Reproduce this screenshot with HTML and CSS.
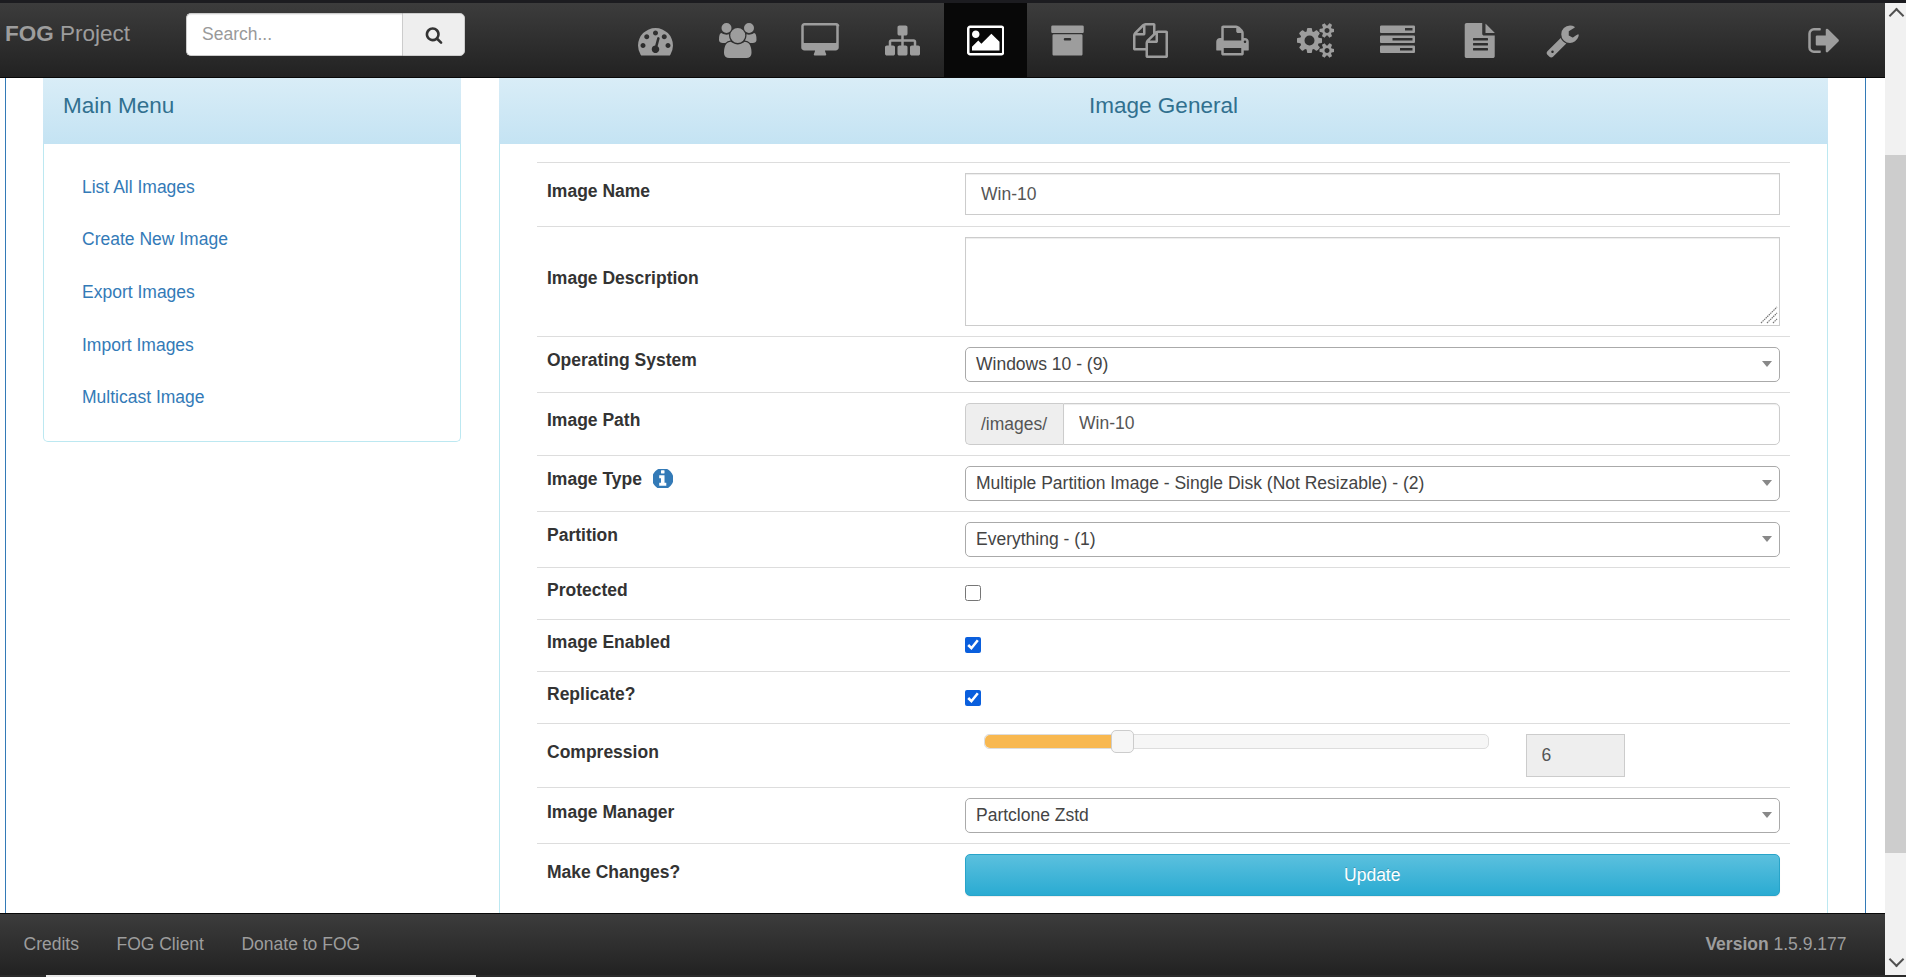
FILE: index.html
```html
<!DOCTYPE html>
<html lang="en">
<head>
<meta charset="UTF-8">
<meta name="viewport" content="width=device-width, initial-scale=1.0">
<title>FOG Project - Image General</title>
<link rel="stylesheet" href="styles.css">
</head>
<body>

<div class="window">
    <div class="strip-top"></div>
    <div class="window-body">
        <div class="viewport">
            <header class="topbar">
                <a class="brand" href="#"><b>FOG</b> Project</a>
                <form class="search">
                    <input type="text" placeholder="Search...">
                    <button type="button" aria-label="Search">
                        <svg viewBox="0 0 1792 1792"><path d="M1216 832q0-185-131.5-316.5t-316.5-131.5-316.5 131.5-131.5 316.5 131.5 316.5 316.5 131.5 316.5-131.5 131.5-316.5zm512 832q0 52-38 90t-90 38q-54 0-90-38l-343-342q-179 124-399 124-143 0-273.5-55.5t-225-150-150-225-55.5-273.5 55.5-273.5 150-225 225-150 273.5-55.5 273.5 55.5 225 150 150 225 55.5 273.5q0 220-124 399l343 343q37 37 37 90z"/></svg>
                    </button>
                </form>
                <nav class="mainnav">
                    <a href="#"><svg viewBox="0 0 1792 1792"><path d="M384 1152q0-53-37.5-90.5t-90.5-37.5-90.5 37.5-37.5 90.5 37.5 90.5 90.5 37.5 90.5-37.5 37.5-90.5zm192-448q0-53-37.5-90.5t-90.5-37.5-90.5 37.5-37.5 90.5 37.5 90.5 90.5 37.5 90.5-37.5 37.5-90.5zm428 481l101-382q6-26-7.5-48.5t-38.5-29.5-48 6.5-30 39.5l-101 382q-60 5-107 43.5t-63 98.5q-20 77 20 146t117 89 146-20 89-117q16-60-6-117t-72-91zm660-33q0-53-37.5-90.5t-90.5-37.5-90.5 37.5-37.5 90.5 37.5 90.5 90.5 37.5 90.5-37.5 37.5-90.5zm-640-640q0-53-37.5-90.5t-90.5-37.5-90.5 37.5-37.5 90.5 37.5 90.5 90.5 37.5 90.5-37.5 37.5-90.5zm448 192q0-53-37.5-90.5t-90.5-37.5-90.5 37.5-37.5 90.5 37.5 90.5 90.5 37.5 90.5-37.5 37.5-90.5zm320 448q0 261-141 483-19 29-54 29h-1402q-35 0-54-29-141-221-141-483 0-182 71-348t191-286 286-191 348-71 348 71 286 191 191 286 71 348z"/></svg></a>
                    <a href="#"><svg class="wide" viewBox="0 0 1920 1792"><path d="M593 896q-162 5-265 128h-134q-82 0-138-40.5t-56-118.5q0-353 124-353 6 0 43.5 21t97.5 42.5 119 21.5q67 0 133-23-5 37-5 66 0 139 81 256zm1071 637q0 120-73 189.5t-194 69.5h-874q-121 0-194-69.5t-73-189.5q0-53 3.5-103.5t14-109 26.5-108.5 43-97.5 62-81 85.5-53.5 111.5-20q10 0 43 21.5t73 48 107 48 135 21.5 135-21.5 107-48 73-48 43-21.5q61 0 111.5 20t85.5 53.5 62 81 43 97.5 26.5 108.5 14 109 3.5 103.5zm-1024-1277q0 106-75 181t-181 75-181-75-75-181 75-181 181-75 181 75 75 181zm704 384q0 159-112.5 271.5t-271.5 112.5-271.5-112.5-112.5-271.5 112.5-271.5 271.5-112.5 271.5 112.5 112.5 271.5zm576 225q0 78-56 118.5t-138 40.5h-134q-103-123-265-128 81-117 81-256 0-29-5-66 66 23 133 23 59 0 119-21.5t97.5-42.5 43.5-21q124 0 124 353zm-128-609q0 106-75 181t-181 75-181-75-75-181 75-181 181-75 181 75 75 181z"/></svg></a>
                    <a href="#"><svg class="wider" viewBox="0 0 2048 1792"><path d="M1856 992v-832q0-13-9.5-22.5t-22.5-9.5h-1600q-13 0-22.5 9.5t-9.5 22.5v832q0 13 9.5 22.5t22.5 9.5h1600q13 0 22.5-9.5t9.5-22.5zm128-832v1088q0 66-47 113t-113 47h-544q0 37 16 77.5t32 71 16 43.5q0 26-19 45t-45 19h-512q-26 0-45-19t-19-45q0-14 16-44t32-70 16-78h-544q-66 0-113-47t-47-113v-1088q0-66 47-113t113-47h1632q66 0 113 47t47 113z"/></svg></a>
                    <a href="#"><svg viewBox="0 0 1792 1792"><path d="M1792 1248v320q0 40-28 68t-68 28h-320q-40 0-68-28t-28-68v-320q0-40 28-68t68-28h96v-192h-512v192h96q40 0 68 28t28 68v320q0 40-28 68t-68 28h-320q-40 0-68-28t-28-68v-320q0-40 28-68t68-28h96v-192h-512v192h96q40 0 68 28t28 68v320q0 40-28 68t-68 28h-320q-40 0-68-28t-28-68v-320q0-40 28-68t68-28h96v-192q0-52 38-90t90-38h512v-192h-96q-40 0-68-28t-28-68v-320q0-40 28-68t68-28h320q40 0 68 28t28 68v320q0 40-28 68t-68 28h-96v192h512q52 0 90 38t38 90v192h96q40 0 68 28t28 68z"/></svg></a>
                    <a href="#" class="active"><svg class="wide" viewBox="0 0 1920 1792"><path d="M640 576q0 80-56 136t-136 56-136-56-56-136 56-136 136-56 136 56 56 136zm1024 384v448h-1408v-192l320-320 160 160 512-512zm96-704h-1600q-13 0-22.5 9.5t-9.5 22.5v1216q0 13 9.5 22.5t22.5 9.5h1600q13 0 22.5-9.5t9.5-22.5v-1216q0-13-9.5-22.5t-22.5-9.5zm160 32v1216q0 66-47 113t-113 47h-1600q-66 0-113-47t-47-113v-1216q0-66 47-113t113-47h1600q66 0 113 47t47 113z"/></svg></a>
                    <a href="#"><svg viewBox="0 0 1792 1792"><path d="M1088 832q0-26-19-45t-45-19h-256q-26 0-45 19t-19 45 19 45 45 19h256q26 0 45-19t19-45zm576-192v960q0 26-19 45t-45 19h-1408q-26 0-45-19t-19-45v-960q0-26 19-45t45-19h1408q26 0 45 19t19 45zm64-448v256q0 26-19 45t-45 19h-1536q-26 0-45-19t-19-45v-256q0-26 19-45t45-19h1536q26 0 45 19t19 45z"/></svg></a>
                    <a href="#"><svg viewBox="0 0 1792 1792"><path d="M1696 384q40 0 68 28t28 68v1216q0 40-28 68t-68 28h-960q-40 0-68-28t-28-68v-288h-544q-40 0-68-28t-28-68v-672q0-40 20-88t48-76l408-408q28-28 76-48t88-20h416q40 0 68 28t28 68v328q68-40 128-40h416zm-544 213l-299 299h299v-299zm-640-384l-299 299h299v-299zm196 647l316-316v-416h-384v416q0 40-28 68t-68 28h-416v640h512v-256q0-40 20-88t48-76zm956 804v-1152h-384v416q0 40-28 68t-68 28h-416v640h896z"/></svg></a>
                    <a href="#"><svg viewBox="0 0 1792 1792"><path d="M448 1536h896v-256h-896v256zm0-640h896v-384h-160q-40 0-68-28t-28-68v-160h-640v640zm1152 64q0-26-19-45t-45-19-45 19-19 45 19 45 45 19 45-19 19-45zm128 0v416q0 13-9.5 22.5t-22.5 9.5h-224v160q0 40-28 68t-68 28h-960q-40 0-68-28t-28-68v-160h-224q-13 0-22.5-9.5t-9.5-22.5v-416q0-79 56.5-135.5t135.5-56.5h64v-544q0-40 28-68t68-28h672q40 0 88 20t76 48l152 152q28 28 48 76t20 88v256h64q79 0 135.5 56.5t56.5 135.5z"/></svg></a>
                    <a href="#"><svg class="wide" viewBox="0 0 1920 1792"><path d="M896 896q0-106-75-181t-181-75-181 75-75 181 75 181 181 75 181-75 75-181zm768 512q0-52-38-90t-90-38-90 38-38 90q0 53 37.5 90.5t90.5 37.5 90.5-37.5 37.5-90.5zm0-1024q0-52-38-90t-90-38-90 38-38 90q0 53 37.5 90.5t90.5 37.5 90.5-37.5 37.5-90.5zm-384 421v185q0 10-7 19.5t-16 10.5l-155 24q-11 35-32 76 34 48 90 115 7 11 7 20 0 12-7 19-23 30-82.5 89.5t-78.5 59.5q-11 0-21-7l-115-90q-37 19-77 31-11 108-23 155-7 24-30 24h-186q-11 0-20-7.5t-10-17.5l-23-153q-34-10-75-31l-118 89q-7 7-20 7-11 0-21-8-144-133-144-160 0-9 7-19 10-14 41-53t47-61q-23-44-35-82l-152-24q-10-1-17-9.5t-7-19.5v-185q0-10 7-19.5t16-10.5l155-24q11-35 32-76-34-48-90-115-7-11-7-20 0-12 7-20 22-30 82-89t79-59q11 0 21 7l115 90q34-18 77-32 11-108 23-154 7-24 30-24h186q11 0 20 7.5t10 17.5l23 153q34 10 75 31l118-89q8-7 20-7 11 0 21 8 144 133 144 160 0 8-7 19-12 16-42 54t-45 60q23 48 34 82l152 23q10 2 17 10.5t7 19.5zm640 533v140q0 16-149 31-12 27-30 52 51 113 51 138 0 4-4 7-122 71-124 71-8 0-46-47t-52-68q-20 2-30 2t-30-2q-14 21-52 68t-46 47q-2 0-124-71-4-3-4-7 0-25 51-138-18-25-30-52-149-15-149-31v-140q0-16 149-31 13-29 30-52-51-113-51-138 0-4 4-7 4-2 35-20t59-34 30-16q8 0 46 46.5t52 67.5q20-2 30-2t30 2q51-71 92-112l6-2q4 0 124 70 4 3 4 7 0 25-51 138 17 23 30 52 149 15 149 31zm0-1024v140q0 16-149 31-12 27-30 52 51 113 51 138 0 4-4 7-122 71-124 71-8 0-46-47t-52-68q-20 2-30 2t-30-2q-14 21-52 68t-46 47q-2 0-124-71-4-3-4-7 0-25 51-138-18-25-30-52-149-15-149-31v-140q0-16 149-31 13-29 30-52-51-113-51-138 0-4 4-7 4-2 35-20t59-34 30-16q8 0 46 46.5t52 67.5q20-2 30-2t30 2q51-71 92-112l6-2q4 0 124 70 4 3 4 7 0 25-51 138 17 23 30 52 149 15 149 31z"/></svg></a>
                    <a href="#"><svg viewBox="0 0 1792 1792"><path d="M1024 1408h640v-128h-640v128zm-384-512h1024v-128h-1024v128zm640-512h384v-128h-384v128zm512 832v256q0 26-19 45t-45 19h-1664q-26 0-45-19t-19-45v-256q0-26 19-45t45-19h1664q26 0 45 19t19 45zm0-512v256q0 26-19 45t-45 19h-1664q-26 0-45-19t-19-45v-256q0-26 19-45t45-19h1664q26 0 45 19t19 45zm0-512v256q0 26-19 45t-45 19h-1664q-26 0-45-19t-19-45v-256q0-26 19-45t45-19h1664q26 0 45 19t19 45z"/></svg></a>
                    <a href="#"><svg viewBox="0 0 1792 1792"><path d="M1596 476q14 14 28 36h-472v-472q22 14 36 28zm-476 164h504v1056q0 40-28 68t-68 28h-1344q-40 0-68-28t-28-68v-1600q0-40 28-68t68-28h800v544q0 40 28 68t68 28zm160 736v-64q0-14-9-23t-23-9h-704q-14 0-23 9t-9 23v64q0 14 9 23t23 9h704q14 0 23-9t9-23zm0-256v-64q0-14-9-23t-23-9h-704q-14 0-23 9t-9 23v64q0 14 9 23t23 9h704q14 0 23-9t9-23zm0-256v-64q0-14-9-23t-23-9h-704q-14 0-23 9t-9 23v64q0 14 9 23t23 9h704q14 0 23-9t9-23z"/></svg></a>
                    <a href="#"><svg viewBox="0 0 1792 1792"><path d="M448 1472q0-26-19-45t-45-19-45 19-19 45 19 45 45 19 45-19 19-45zm644-420l-682 682q-37 37-90 37-52 0-91-37l-106-108q-38-36-38-90 0-53 38-91l681-681q39 98 114.5 173.5t173.5 114.5zm634-435q0 39-23 106-47 134-164.5 217.5t-258.5 83.5q-185 0-316.5-131.5t-131.5-316.5 131.5-316.5 316.5-131.5q58 0 121.5 16.5t107.5 46.5q16 11 16 28t-16 28l-293 169v224l193 107q5-3 79-48.5t135.5-81 70.5-35.5q15 0 23.5 10t8.5 25z"/></svg></a>
                </nav>
                <a class="logout" href="#"><svg viewBox="0 0 1792 1792"><path d="M704 1440q0 4 1 20t.5 26.5-3 23.5-10 19.5-20.5 6.5h-320q-119 0-203.5-84.5t-84.5-203.5v-704q0-119 84.5-203.5t203.5-84.5h320q13 0 22.5 9.5t9.5 22.5q0 4 1 20t.5 26.5-3 23.5-10 19.5-20.5 6.5h-320q-66 0-113 47t-47 113v704q0 66 47 113t113 47h312l11.5 1 11.5 3 8 5.5 7 9 2 13.5zm928-544q0 26-19 45l-544 544q-19 19-45 19t-45-19-19-45v-288h-448q-26 0-45-19t-19-45v-384q0-26 19-45t45-19h448v-288q0-26 19-45t45-19 45 19l544 544q19 19 19 45z"/></svg></a>
            </header>

            <main class="content">
                <aside class="panel menu-panel">
                    <h3 class="panel-heading">Main Menu</h3>
                    <ul class="side-menu">
                        <li><a href="#">List All Images</a></li>
                        <li><a href="#">Create New Image</a></li>
                        <li><a href="#">Export Images</a></li>
                        <li><a href="#">Import Images</a></li>
                        <li><a href="#">Multicast Image</a></li>
                    </ul>
                </aside>

                <section class="panel form-panel">
                    <h3 class="panel-heading centered">Image General</h3>
                    <form class="image-form">
                        <div class="row row-name">
                            <label>Image Name</label>
                            <div class="control"><input class="text-field" type="text" value="Win-10"></div>
                        </div>
                        <div class="row">
                            <label>Image Description</label>
                            <div class="control area-wrap">
                                <textarea class="text-field area"></textarea>
                                <svg class="grip" viewBox="0 0 18 18"><path d="M1 17L17 1M7 17L17 7M13 17l4-4"/></svg>
                            </div>
                        </div>
                        <div class="row">
                            <label>Operating System</label>
                            <div class="control"><div class="select-box">Windows 10 - (9)</div></div>
                        </div>
                        <div class="row">
                            <label>Image Path</label>
                            <div class="control path-group">
                                <span class="addon">/images/</span>
                                <input class="text-field" type="text" value="Win-10">
                            </div>
                        </div>
                        <div class="row">
                            <label>Image Type
                                <svg class="info" viewBox="192 192 1408 1408"><path d="M1152 1376v-160q0-14-9-23t-23-9h-96v-512q0-14-9-23t-23-9h-320q-14 0-23 9t-9 23v160q0 14 9 23t23 9h96v320h-96q-14 0-23 9t-9 23v160q0 14 9 23t23 9h448q14 0 23-9t9-23zm-128-896v-160q0-14-9-23t-23-9h-192q-14 0-23 9t-9 23v160q0 14 9 23t23 9h192q14 0 23-9t9-23zm640 416q0 209-103 385.5t-279.5 279.5-385.5 103-385.5-103-279.5-279.5-103-385.5 103-385.5 279.5-279.5 385.5-103 385.5 103 279.5 279.5 103 385.5z"/></svg>
                            </label>
                            <div class="control"><div class="select-box">Multiple Partition Image - Single Disk (Not Resizable) - (2)</div></div>
                        </div>
                        <div class="row">
                            <label>Partition</label>
                            <div class="control"><div class="select-box">Everything - (1)</div></div>
                        </div>
                        <div class="row row-check">
                            <label>Protected</label>
                            <div class="control"><input class="check" type="checkbox"></div>
                        </div>
                        <div class="row row-check">
                            <label>Image Enabled</label>
                            <div class="control"><input class="check" type="checkbox" checked></div>
                        </div>
                        <div class="row row-check">
                            <label>Replicate?</label>
                            <div class="control"><input class="check" type="checkbox" checked></div>
                        </div>
                        <div class="row">
                            <label>Compression</label>
                            <div class="control slider-group">
                                <div class="slider">
                                    <div class="slider-range"></div>
                                    <span class="slider-handle"></span>
                                </div>
                                <input class="slider-value" type="text" value="6" readonly>
                            </div>
                        </div>
                        <div class="row">
                            <label>Image Manager</label>
                            <div class="control"><div class="select-box">Partclone Zstd</div></div>
                        </div>
                        <div class="row">
                            <label>Make Changes?</label>
                            <div class="control"><button type="button" class="update-btn">Update</button></div>
                        </div>
                    </form>
                </section>
            </main>

            <footer class="bottombar">
                <a href="#">Credits</a>
                <a href="#">FOG Client</a>
                <a href="#">Donate to FOG</a>
                <span class="version"><b>Version</b> 1.5.9.177</span>
            </footer>
        </div>

        <div class="scrollbar">
            <span class="scroll-arrow up"></span>
            <span class="scroll-thumb"></span>
            <span class="scroll-arrow down"></span>
        </div>
    </div>
    <div class="strip-bottom"><span></span></div>
</div>

</body>
</html>
```

FILE: styles.css
```css
* {
    box-sizing: border-box;
}

html, body {
    height: 100%;
}

body {
    margin: 0;
    overflow: hidden;
    background-color: #fff;
    font-family: "Liberation Sans", Arial, sans-serif;
    font-size: 17.5px;
    line-height: 25px;
    color: #333;
}

a {
    text-decoration: none;
}

.window {
    display: flex;
    flex-direction: column;
    height: 100%;
}

.strip-top {
    flex: none;
    height: 3px;
    background-color: #1c1c20;
}

.strip-bottom {
    flex: none;
    height: 2px;
    padding-left: 46px;
    background-color: #2b2b2b;
}

.strip-bottom span {
    display: block;
    width: 430px;
    height: 2px;
    background-color: #e6e6e6;
}

.window-body {
    flex: 1;
    min-height: 0;
    display: flex;
}

.viewport {
    flex: 1;
    min-width: 0;
    display: flex;
    flex-direction: column;
}

/* top navbar */
.topbar {
    flex: none;
    height: 75px;
    display: flex;
    align-items: stretch;
    border-bottom: 1px solid #080808;
    background-image: linear-gradient(to bottom, #3c3c3c, #222);
}

.brand {
    width: 186px;
    padding: 17px 0 0 5px;
    font-size: 22.5px;
    line-height: 28px;
    color: #9d9d9d;
}

.search {
    display: flex;
    width: 279px;
    height: 43px;
    margin-top: 10px;
}

.search input {
    flex: 1;
    min-width: 0;
    padding: 0 15px;
    border: 1px solid #ccc;
    border-right: none;
    border-radius: 5px 0 0 5px;
    font: inherit;
    color: #555;
    box-shadow: inset 0 1px 1px rgba(0, 0, 0, 0.075);
}

.search input::placeholder {
    color: #999;
    opacity: 1;
}

.search button {
    width: 63px;
    padding: 0;
    border: 1px solid #ccc;
    border-radius: 0 5px 5px 0;
    background-color: #eee;
    display: flex;
    align-items: center;
    justify-content: center;
}

.search svg {
    width: 18px;
    height: 18px;
    fill: #333;
}

.mainnav {
    display: flex;
    margin-left: 149px;
}

.mainnav a {
    width: 82.5px;
    display: flex;
    align-items: center;
    justify-content: center;
}

.mainnav svg,
.logout svg {
    width: 35px;
    height: 35px;
    fill: #9d9d9d;
}

.mainnav svg.wide {
    width: 37.5px;
}

.mainnav svg.wider {
    width: 40px;
}

.mainnav a.active {
    background-color: #080808;
}

.mainnav a.active svg {
    fill: #fff;
}

.logout {
    margin-left: auto;
    padding-right: 43px;
    display: flex;
    align-items: center;
}

/* page body */
.content {
    flex: 1;
    min-height: 0;
    overflow: hidden;
    display: flex;
    align-items: flex-start;
    gap: 38px;
    width: 1861px;
    margin-left: 5px;
    padding: 0 37px 0 37px;
    border-left: 1px solid #337ab7;
    border-right: 1px solid #337ab7;
}

.panel {
    border: 1px solid #bce8f1;
    border-top: none;
    border-radius: 0 0 5px 5px;
    background-color: #fff;
}

.menu-panel {
    flex: none;
    width: 418px;
}

.form-panel {
    flex: 1;
    min-width: 0;
}

.panel-heading {
    height: 66px;
    margin: 0 -1px;
    padding: 12px 20px 0;
    background-image: linear-gradient(to bottom, #d9edf7, #c4e3f3);
    font-size: 22.5px;
    font-weight: normal;
    line-height: 31px;
    color: #31708f;
}

.panel-heading.centered {
    text-align: center;
}

.side-menu {
    margin: 0;
    padding: 17.7px 19px 18.3px;
    list-style: none;
}

.side-menu li + li {
    margin-top: 2.7px;
}

.side-menu a {
    display: block;
    padding: 13px 19px 12px;
    color: #337ab7;
}

/* form table */
.image-form {
    margin: 18px 37px 0;
    padding-bottom: 40px;
}

.row {
    display: flex;
    align-items: center;
    padding: 10px 10.5px 10px 10px;
    border-top: 1px solid #ddd;
}

.row label {
    flex: none;
    width: 418px;
    margin-bottom: 6.25px;
    font-weight: bold;
    color: #333;
}

.row-name {
    padding-bottom: 11px;
}

.row-name label {
    margin-bottom: 4.5px;
}

.row-check {
    height: 52.3px;
}

.control {
    flex: 1;
    min-width: 0;
}

.info {
    width: 19.5px;
    height: 19.5px;
    margin-left: 6.5px;
    vertical-align: -3px;
    fill: #337ab7;
}

.text-field {
    display: block;
    width: 100%;
    height: 42px;
    padding: 0 15px;
    border: 1px solid #ccc;
    background-color: #fff;
    font: inherit;
    color: #555;
    box-shadow: inset 0 1px 1px rgba(0, 0, 0, 0.075);
}

.area-wrap {
    position: relative;
}

.area {
    height: 88.5px;
    padding: 8px 15px;
    resize: none;
}

.grip {
    position: absolute;
    right: 2px;
    bottom: 2px;
    width: 18px;
    height: 18px;
    fill: none;
    stroke: #777;
    stroke-width: 1.2;
    stroke-dasharray: 1.5 0.7;
}

.select-box {
    position: relative;
    height: 35px;
    padding: 0 25px 0 10px;
    border: 1px solid #aaa;
    border-radius: 5px;
    font-size: 17.5px;
    line-height: 33px;
    color: #444;
}

.select-box::after {
    content: "";
    position: absolute;
    top: 13px;
    right: 7px;
    border-top: 6px solid #888;
    border-left: 5px solid transparent;
    border-right: 5px solid transparent;
}

.path-group {
    display: flex;
}

.addon {
    flex: none;
    width: 98px;
    height: 42px;
    padding: 0 15px;
    border: 1px solid #ccc;
    border-right: none;
    border-radius: 5px 0 0 5px;
    background-color: #eee;
    line-height: 40px;
    color: #555;
}

.path-group .text-field {
    flex: 1;
    min-width: 0;
    border-radius: 0 5px 5px 0;
}

.check {
    display: block;
    width: 16px;
    height: 16px;
    margin: 0;
    accent-color: #0a5fdd;
}

.slider-group {
    display: flex;
    align-items: flex-start;
    gap: 37px;
    padding-left: 18.5px;
}

.slider {
    position: relative;
    width: 505px;
    height: 15px;
    border: 1px solid #ddd;
    border-radius: 5px;
    background-color: #f6f6f6;
}

.slider-range {
    width: 27%;
    height: 100%;
    border-radius: 5px 0 0 5px;
    background-color: #f8b850;
}

.slider-handle {
    position: absolute;
    top: -5px;
    left: 126px;
    width: 23px;
    height: 23px;
    border: 1px solid #ccc;
    border-radius: 5px;
    background-color: #f6f6f6;
}

.slider-value {
    width: 99px;
    height: 43px;
    padding: 0 15px;
    border: 1px solid #ccc;
    background-color: #eee;
    font: inherit;
    color: #555;
}

.update-btn {
    display: block;
    width: 100%;
    height: 42px;
    border: 1px solid #28a4c9;
    border-radius: 5px;
    background-image: linear-gradient(to bottom, #5bc0de, #2aabd2);
    box-shadow: 0 1px 1px rgba(0, 0, 0, 0.075);
    font: inherit;
    color: #fff;
    text-shadow: 0 -1px 0 rgba(0, 0, 0, 0.2);
}

/* bottom navbar */
.bottombar {
    flex: none;
    height: 62px;
    display: flex;
    align-items: center;
    gap: 37.5px;
    padding: 0 38.5px 0 23.5px;
    border-top: 1px solid #080808;
    background-image: linear-gradient(to bottom, #3c3c3c, #222);
    color: #9d9d9d;
}

.bottombar a {
    color: #9d9d9d;
}

.version {
    margin-left: auto;
}

/* fake page scrollbar */
.scrollbar {
    flex: none;
    width: 21px;
    display: flex;
    flex-direction: column;
    align-items: stretch;
    background-color: #f1f1f1;
}

.scroll-arrow {
    position: relative;
    height: 152px;
    flex: none;
}

.scroll-arrow.down {
    flex: 1;
    height: auto;
}

.scroll-arrow::after {
    content: "";
    position: absolute;
    left: 6px;
    width: 9px;
    height: 9px;
    border-left: 2.5px solid #505050;
    border-top: 2.5px solid #505050;
}

.scroll-arrow.up::after {
    top: 7px;
    transform: rotate(45deg);
}

.scroll-arrow.down::after {
    bottom: 10px;
    transform: rotate(225deg);
}

.scroll-thumb {
    flex: none;
    height: 698px;
    background-color: #cdcdcd;
}
```
